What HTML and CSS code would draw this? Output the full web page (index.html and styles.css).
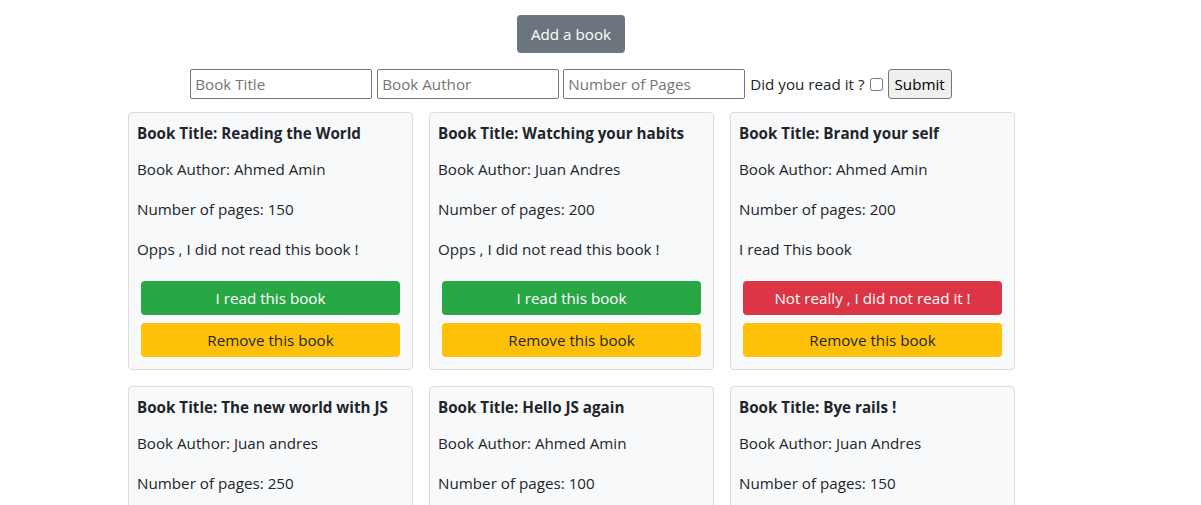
FILE: index.html
```html
<!DOCTYPE html>
<html lang="en">
<head>
<meta charset="utf-8">
<title>Library</title>
<link rel="stylesheet" href="styles.css">
</head>
<body>
<div class="page">
  <div class="top">
    <button class="btn btn-secondary" type="button">Add a book</button>
  </div>
  <form class="book-form">
    <input class="field" type="text" placeholder="Book Title">
    <input class="field f2" type="text" placeholder="Book Author">
    <input class="field f3" type="text" placeholder="Number of Pages">
    <label class="read-label">Did you read it ?</label>
    <input class="check" type="checkbox">
    <button class="submit" type="button">Submit</button>
  </form>
  <div class="cards">
    <div class="card">
      <h5 class="card-title">Book Title: Reading the World</h5>
      <p>Book Author: Ahmed Amin</p>
      <p>Number of pages: 150</p>
      <p>Opps , I did not read this book !</p>
      <div class="actions">
        <button class="btn btn-success" type="button">I read this book</button>
        <button class="btn btn-warning" type="button">Remove this book</button>
      </div>
    </div>
    <div class="card">
      <h5 class="card-title">Book Title: Watching your habits</h5>
      <p>Book Author: Juan Andres</p>
      <p>Number of pages: 200</p>
      <p>Opps , I did not read this book !</p>
      <div class="actions">
        <button class="btn btn-success" type="button">I read this book</button>
        <button class="btn btn-warning" type="button">Remove this book</button>
      </div>
    </div>
    <div class="card">
      <h5 class="card-title">Book Title: Brand your self</h5>
      <p>Book Author: Ahmed Amin</p>
      <p>Number of pages: 200</p>
      <p>I read This book</p>
      <div class="actions">
        <button class="btn btn-danger" type="button">Not really , I did not read it !</button>
        <button class="btn btn-warning" type="button">Remove this book</button>
      </div>
    </div>
    <div class="card">
      <h5 class="card-title">Book Title: The new world with JS</h5>
      <p>Book Author: Juan andres</p>
      <p>Number of pages: 250</p>
      <p>Opps , I did not read this book !</p>
      <div class="actions">
        <button class="btn btn-success" type="button">I read this book</button>
        <button class="btn btn-warning" type="button">Remove this book</button>
      </div>
    </div>
    <div class="card">
      <h5 class="card-title">Book Title: Hello JS again</h5>
      <p>Book Author: Ahmed Amin</p>
      <p>Number of pages: 100</p>
      <p>Opps , I did not read this book !</p>
      <div class="actions">
        <button class="btn btn-success" type="button">I read this book</button>
        <button class="btn btn-warning" type="button">Remove this book</button>
      </div>
    </div>
    <div class="card">
      <h5 class="card-title">Book Title: Bye rails !</h5>
      <p>Book Author: Juan Andres</p>
      <p>Number of pages: 150</p>
      <p>Opps , I did not read this book !</p>
      <div class="actions">
        <button class="btn btn-success" type="button">I read this book</button>
        <button class="btn btn-warning" type="button">Remove this book</button>
      </div>
    </div>
  </div>
</div>
</body>
</html>
```
FILE: styles.css
```css
* { box-sizing: border-box; }
html, body { margin: 0; padding: 0; background: #fff; }
body {
  font-family: "Open Sans", "Noto Sans", Arial, sans-serif;
  font-size: 15.2px;
  line-height: 24px;
  color: #212529;
}
.page { width: 1142px; padding-top: 15px; }
.top { display: flex; justify-content: center; }
.btn {
  font-family: inherit;
  font-size: 15.2px;
  line-height: 24px;
  border: 1px solid transparent;
  border-radius: 4px;
  cursor: pointer;
}
.btn-secondary {
  background: #6c757d;
  color: #fff;
  padding: 6px 13px;
  height: 38px;
}
.book-form {
  display: flex;
  justify-content: center;
  align-items: center;
  margin: 16px 0 13px;
  height: 30px;
}
.field {
  width: 182px;
  height: 30px;
  border: 1px solid #767676;
  border-radius: 2px;
  padding: 1px 4px;
  font-family: inherit;
  font-size: 15.2px;
  color: #212529;
  background: #fff;
}
.field::placeholder { color: #757575; }
.f2 { margin-left: 5px; }
.f3 { margin-left: 4px; }
.read-label { margin-left: 5px; }
.check { width: 13px; height: 13px; margin: 0 0 0 5px; }
.submit {
  margin-left: 5px;
  height: 30px;
  padding: 0 6px;
  font-family: inherit;
  font-size: 15.2px;
  background: #efefef;
  color: #000;
  border: 1px solid #767676;
  border-radius: 3px;
}
.cards {
  display: grid;
  grid-template-columns: repeat(3, 285px);
  gap: 16px;
  margin-left: 128px;
}
.card {
  background: #f8f9fa;
  border: 1px solid #dcdcdc;
  border-radius: 4px;
  padding: 8px;
}
.card-title {
  margin: 0 0 12px;
  font-size: 15.2px;
  line-height: 24px;
  font-weight: 700;
}
.card p { margin: 0 0 16px; }
.actions {
  padding: 4px;
  display: flex;
  flex-direction: column;
  gap: 8px;
}
.actions .btn { height: 34px; padding: 4px 12px; width: 100%; }
.btn-success { background: #28a745; color: #fff; }
.btn-danger { background: #dc3545; color: #fff; }
.btn-warning { background: #ffc107; color: #212529; }
```
